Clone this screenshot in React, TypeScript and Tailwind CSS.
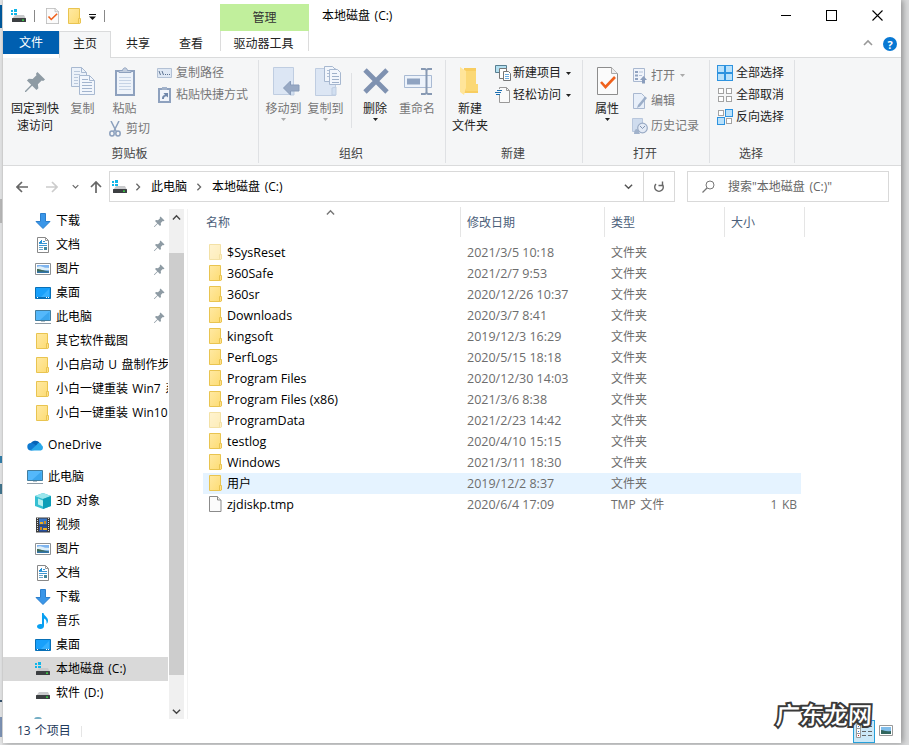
import type { ReactNode } from "react";

type IconProps = { className?: string };

type NavItem = {
  label: string;
  icon: ReactNode;
  pinned?: boolean;
  active?: boolean;
};

type FileRow = {
  name: string;
  date: string;
  kind: "folder" | "hidden" | "file";
  type?: string;
  size?: string;
  hover?: boolean;
};

function DriveIcon({ windows = true }: { windows?: boolean }) {
  return (
    <svg width="16" height="16" viewBox="0 0 16 16" className="shrink-0">
      {windows && (
        <path d="M0 2h2v2H0zM3 1h3v3H3zM0 5h2v2H0zM3 5h3v2H3z" fill="#10b5e8" />
      )}
      <path d="M4 7h9l2 4H1z" fill="#c9cacc" />
      <rect x="1" y="10" width="14" height="4" rx=".5" fill="#3c3f42" />
      <rect x="11" y="11.500" width="2" height="1.300" fill="#38e345" />
    </svg>
  );
}

function FolderIcon({ faded = false, className = "" }: IconProps & { faded?: boolean }) {
  return (
    <svg width="14" height="16" viewBox="0 0 14 16" className={`shrink-0 ${faded ? "opacity-50" : ""} ${className}`}>
      <defs>
        <linearGradient id="folderFill" x1="0" y1="0" x2="1" y2="1">
          <stop offset="0" stopColor="#ffe9a3" />
          <stop offset="1" stopColor="#fddc74" />
        </linearGradient>
      </defs>
      <path d="M.5.5h11v15H.5z" fill="url(#folderFill)" stroke="#e9c450" />
      <path d="M10.500 10.500h2v4.500l-1 .500h-1z" fill="#ffe08a" stroke="#e9c450" />
    </svg>
  );
}

function FileIcon() {
  return (
    <svg width="14" height="16" viewBox="0 0 14 16" className="shrink-0">
      <path d="M.5.500h8l3.500 3.500v11.500H.500z" fill="#fbfbfb" stroke="#8b8b8b" />
      <path d="M8.500.500V4H12" fill="#eee" stroke="#8b8b8b" />
    </svg>
  );
}

function DownloadIcon() {
  return (
    <svg width="16" height="16" viewBox="0 0 16 16">
      <path d="M5.500.500h5v8h4.500L8 15.500 1 8.500h4.500z" fill="#3a96e8" stroke="#2b7fcd" />
    </svg>
  );
}

function DocumentIcon() {
  return (
    <svg width="16" height="16" viewBox="0 0 16 16">
      <path d="M2.500.500h8l3 3v12h-11z" fill="#fff" stroke="#888" />
      <path d="M10.500.500v3h3" fill="none" stroke="#999" />
      <path d="M4 6.500h8M4 8.500h8M8 4.500h2" stroke="#3d97d3" />
      <path d="M4 10.500h4M4 12.500h4" stroke="#6ba6cb" />
      <path d="M4 5h1V4h1V3h1v3H4z" fill="#2391d8" />
      <path d="M9 10h3v3H9z" fill="#42869b" />
    </svg>
  );
}

function PictureIcon() {
  return (
    <svg width="16" height="16" viewBox="0 0 16 16">
      <path d="M.5 2.500h15v11H.500z" fill="#fff" stroke="#8d9194" />
      <path d="M2 4h12v8H2z" fill="#7fb4ee" />
      <path d="M2 6c4-2 5 1 12 1v2H2z" fill="#dceef9" />
      <path d="M2 8c3 0 6 1.500 12 2.500v.5H2z" fill="#3f6a55" />
      <path d="M2 10.500h12V12H2z" fill="#3275ac" />
    </svg>
  );
}

function DesktopIcon() {
  return (
    <svg width="16" height="16" viewBox="0 0 16 16">
      <path d="M.500 2.500h15v11H.500z" fill="#18a0fb" stroke="#0870b7" />
      <path d="M1 12.500h14" stroke="#0870b7" />
      <path d="M2 12.500h1M11 12.500h1M13 12.500h1" stroke="#fff" />
      <path d="M14 4L6 12h8z" fill="#35b0ff" />
    </svg>
  );
}

function ComputerIcon() {
  return (
    <svg width="16" height="16" viewBox="0 0 16 16">
      <path d="M.500 1.500h15v10H.500z" fill="#54b8fb" stroke="#437d9e" />
      <path d="M14.500 2.500L5 11h9.500z" fill="#3ba6ee" />
      <path d="M6 12h4v1H6z" fill="#b6c2ca" />
      <path d="M0 14.500h16" stroke="#8c9aa5" />
    </svg>
  );
}

function OneDriveIcon() {
  return (
    <svg width="17" height="16" viewBox="0 0 17 16" className="shrink-0">
      <path d="M3.500 7.500a5 4.800 0 0 1 9.200-1.500l-4 4z" fill="#0563b7" />
      <path d="M4 13.500a3.700 3.700 0 0 1 0-7.400c2 0 3.500 1 5.500 3l-2 4z" fill="#0f7ad1" />
      <path d="M10 7.500c1-2 4-2 4.500.5a3 3 0 0 1-.7 5.500H3.500z" fill="#28a8ea" />
    </svg>
  );
}

function CubeIcon() {
  return (
    <svg width="16" height="16" viewBox="0 0 16 16">
      <path d="M8 0l8 3v10l-8 3-8-3V3z" fill="#35bfd2" />
      <path d="M8 0l8 3-8 3-8-3z" fill="#9be6ec" />
      <path d="M8 6l8-3v10l-8 3z" fill="#0c9eb8" />
      <path d="M3 5.500L8 7.500v6l-5-2z" fill="#b6f0f0" />
    </svg>
  );
}

function VideoIcon() {
  return (
    <svg width="16" height="16" viewBox="0 0 16 16">
      <path d="M1 .5h14v15H1z" fill="#3d3d3d" />
      <path d="M4 1.500h8v6H4z" fill="#3977c8" />
      <path d="M4 8.500h8v6H4z" fill="#264fa0" />
      <path d="M5 5h3v2H5zM8 11h4v2H8z" fill="#f0af23" />
      <path d="M9 4h2v3H9zM5 10h2v3H5z" fill="#c78a24" />
      <path d="M2.500 1v14M13.500 1v14" stroke="#ddd" strokeDasharray="1 1" />
    </svg>
  );
}

function MusicIcon() {
  return (
    <svg width="16" height="16" viewBox="0 0 16 16">
      <path d="M7 0h1.500c.5 3 4.500 4 4.500 7.500 0 1.500-.5 2.500-1.500 3.500.5-3-.5-4.500-2.500-5.500V13c0 1.700-1.500 3-3.700 3C3.500 16 2 15 2 13.500S3.500 11 5.500 11c.6 0 1 .1 1.500.3z" fill="#08a0f2" />
    </svg>
  );
}

function Pin({ className = "" }: IconProps) {
  return (
    <svg viewBox="0 0 22 22" className={className}>
      <path d="M13 1l8 8-2 1.500-1.500-.5-4 4 .5 4-2 2-4.500-4.500L1 22H0v-1l6.500-6.500L2 10l2-2 4 .5 4-4L11.500 3z" fill="#8e9ba4" />
    </svg>
  );
}

function SmallArrow({ faded = false }: { faded?: boolean }) {
  return (
    <svg width="5" height="3" viewBox="0 0 5 3" className="shrink-0">
      <path d="M0 0h5L2.500 3z" fill={faded ? "#aaa" : "#222"} />
    </svg>
  );
}

function Chevron({ dir, className = "" }: IconProps & { dir: "up" | "down" | "right" }) {
  const d = { up: "M1 6l4-4 4 4", down: "M1 3l4 4 4-4", right: "M3 1l4 4-4 4" }[dir];
  return (
    <svg viewBox="0 0 10 10" className={`shrink-0 ${className}`}>
      <path d={d} fill="none" stroke="currentColor" strokeWidth="1.600" />
    </svg>
  );
}

function CopyPagesIcon() {
  return (
    <svg width="24" height="28" viewBox="0 0 24 28">
      <path d="M.500.500h10l5 5v14H.500z" fill="#ecf2fa" stroke="#a8b9d1" />
      <path d="M10.500.500v5h5" fill="none" stroke="#a8b9d1" />
      <path d="M3 4.500h6M3 7.500h6M3 10.500h4M3 13.500h4M3 16.500h4" stroke="#b9c8dc" />
      <path d="M8.500 8.500h10l5 5v14h-15z" fill="#f2f6fc" stroke="#a8b9d1" />
      <path d="M18.500 8.500v5h5" fill="none" stroke="#a8b9d1" />
      <path d="M11 12.500h6M11 15.500h10M11 18.500h10M11 21.500h10M11 24.500h10" stroke="#a2b4ce" />
    </svg>
  );
}

function PasteIcon() {
  return (
    <svg width="20" height="29" viewBox="0 0 20 29">
      <path d="M1 4h18v24H1z" fill="#eef3fa" stroke="#8ea1be" strokeWidth="2" />
      <path d="M4 5.500V3.500h3.500C8 0 12 0 12.500 3.500H16v2z" fill="#c2cdde" stroke="#8ea1be" />
      <path d="M4 10.500h12M4 13.500h12M4 16.500h12M4 19.500h12M4 22.500h12" stroke="#c6d3e5" />
    </svg>
  );
}

function CutIcon() {
  return (
    <svg width="12" height="16" viewBox="0 0 12 16" fill="none" stroke="#8ca0bd" strokeWidth="1.500">
      <path d="M2 0l5.500 11M10 0L4.500 11" />
      <ellipse cx="3" cy="12.500" rx="2.200" ry="2.500" />
      <ellipse cx="9" cy="12.500" rx="2.200" ry="2.500" />
    </svg>
  );
}

function PathIcon() {
  return (
    <svg width="15" height="10" viewBox="0 0 15 10">
      <path d="M.500.500h14v9H.500z" fill="#dfe8f4" stroke="#b3c1d5" />
      <path d="M2 3l1.500 4M5 3l1.500 4M8 6.500h1M10 6.500h1M12 6.500h1" stroke="#5d7392" />
    </svg>
  );
}

function PasteShortcutIcon() {
  return (
    <svg width="13" height="16" viewBox="0 0 13 16">
      <path d="M1 2h11v13H1z" fill="#f0f4fb" stroke="#8ea1be" strokeWidth="2" />
      <path d="M4 0h5v3H4z" fill="#a2b2ca" />
      <path d="M4 12c0-3 1-4 3-4L5.500 6H10v4.500L8.500 9.300C6.500 9.500 6 10 6 12z" fill="#6f87ab" />
    </svg>
  );
}

function MoveIcon() {
  return (
    <svg width="27" height="29" viewBox="0 0 27 29">
      <path d="M.500.500h20v27H.500z" fill="#dce6f4" stroke="#bfcde1" />
      <path d="M17 20v8h4v-8z" fill="#d1dff1" stroke="#bfcde1" />
      <path d="M10.500 21l7-7v4h8.500v6h-8.500v4z" fill="#98a9c4" stroke="#889bb9" />
    </svg>
  );
}

function CopyToIcon() {
  return (
    <svg width="27" height="31" viewBox="0 0 27 31">
      <path d="M.500 2.500h20v27H.500z" fill="#dce6f4" stroke="#bfcde1" />
      <path d="M17 22v7h4v-8z" fill="#d1dff1" stroke="#bfcde1" />
      <path d="M9.500.500h8l3 3v12h-11z" fill="#f2f6fc" stroke="#a7b8d0" />
      <path d="M12 4.500h5M12 7.500h5M12 10.500h5" stroke="#afbfd5" />
      <path d="M14.500 3.500h8l3 3v12h-11z" fill="#f2f6fc" stroke="#a7b8d0" />
      <path d="M17 7.500h5M17 10.500h7M17 13.500h7M17 16.500h7" stroke="#9fb1ca" />
    </svg>
  );
}

function DeleteIcon() {
  return (
    <svg width="26" height="26" viewBox="0 0 26 26">
      <path d="M2 2l22 22M24 2L2 24" stroke="#7f92b1" strokeWidth="4.800" />
    </svg>
  );
}

function RenameIcon() {
  return (
    <svg width="28" height="27" viewBox="0 0 28 27">
      <path d="M.500 7.500h27v12H.500z" fill="#edf3fb" stroke="#a9bad3" />
      <path d="M3 10.500h13v6H3z" fill="#8fa3c1" />
      <path d="M17 1h4l1.500 1L24 1h4M17 26h4l1.500-1L24 26h4M22.500 2v23" fill="none" stroke="#8799b3" strokeWidth="2" />
    </svg>
  );
}

function NewFolderIcon() {
  return (
    <svg width="20" height="28" viewBox="0 0 20 28">
      <path d="M4 1h12v16h2v9H4z" fill="#f8cd60" />
      <path d="M0 0l6 4v17l-2 7-4-3z" fill="#ffe59a" />
      <path d="M6 4h10v13h2v7H6z" fill="#fbd875" />
    </svg>
  );
}

function NewItemIcon() {
  return (
    <svg width="16" height="16" viewBox="0 0 16 16">
      <path d="M.500.500h11v7H.500z" fill="#b3dff0" stroke="#587f91" />
      <path d="M4.500 3.500h7v10h-7z" fill="#fff" stroke="#777" />
      <path d="M8.500 6.500h5l2 2v7h-7z" fill="#fff" stroke="#777" />
      <path d="M10 9.500h4M10 11.500h4M10 13.500h4" stroke="#6cace0" />
    </svg>
  );
}

function EasyAccessIcon() {
  return (
    <svg width="16" height="16" viewBox="0 0 16 16">
      <path d="M4.500.500h7l3 3v12h-10z" fill="#fafafa" stroke="#999" />
      <path d="M11.500.500v3h3" fill="none" stroke="#999" />
      <path d="M1 2h7v6H1z" fill="#f8f9fa" />
      <path d="M2 3.500h5M0 5.500h6M1 7.500h4" stroke="#1d6fb0" />
    </svg>
  );
}

function CheckPage({ className = "" }: IconProps) {
  return (
    <svg viewBox="0 0 21 28" preserveAspectRatio="none" className={className}>
      <path d="M.500.500h14l6 6v21H.500z" fill="#fbfbfb" stroke="#8d8d8d" />
      <path d="M14.500.500v6h6" fill="#eee" stroke="#aaa" />
      <path d="M4 15l4.500 5L18 10" fill="none" stroke="#f0611c" strokeWidth="2.600" />
    </svg>
  );
}

function OpenIcon() {
  return (
    <svg width="14" height="16" viewBox="0 0 14 16">
      <path d="M.500.500h11v13H.500z" fill="#f0f4fb" stroke="#a9b8d0" />
      <path d="M2 3h3v2H2zM2 6.500h3v2H2zM2 10h3v2H2z" fill="#8fa2c0" />
      <path d="M6 4h4M6 7.500h3" stroke="#b4c2d8" />
      <path d="M10.500 8l3.500 4h-2v3.500H9V12H7z" fill="#8a9dbc" />
    </svg>
  );
}

function EditIcon() {
  return (
    <svg width="14" height="16" viewBox="0 0 14 16">
      <path d="M.500.500h8l3 3v12H.500z" fill="#e8eff9" stroke="#a9b8d0" />
      <path d="M12 3.500l2 1.500-7 8.500-3 1.500 1-3z" fill="#9caec8" />
    </svg>
  );
}

function HistoryIcon() {
  return (
    <svg width="16" height="16" viewBox="0 0 16 16">
      <path d="M.500.500h10v13H.500z" fill="#cfdcee" stroke="#b9c7dc" />
      <path d="M2 16c0-5 3-6 4-4l2 4z" fill="#a1b2cb" />
      <circle cx="10.500" cy="10" r="4.800" fill="#e3eaf5" stroke="#9aabc5" strokeWidth="1.200" />
      <path d="M8 8l2.500 2.500L13 8" fill="none" stroke="#8093b0" />
    </svg>
  );
}

// four-square icon shared by the three selection commands
function SquaresIcon({ mode }: { mode: "all" | "none" | "invert" }) {
  const on = { all: [true, true, true, true], none: [false, false, false, false], invert: [false, true, true, false] }[mode];
  const pos = [[0, 0], [8, 0], [0, 8], [8, 8]];
  return (
    <svg width="16" height="16" viewBox="0 0 16 16">
      {pos.map(([x, y], i) =>
        on[i] ? (
          <rect key={i} x={x + 0.5} y={y + 0.5} width="7" height="7" fill="#b9e1fb" stroke="#2e93df" />
        ) : (
          <rect key={i} x={x + 1.5} y={y + 1.5} width="5" height="5" fill="#fff" stroke="#a3a3a3" />
        )
      )}
    </svg>
  );
}

function RibbonGroup({ label, className, children }: { label: string; className: string; children: ReactNode }) {
  return (
    <div className={`flex shrink-0 flex-col ${className}`}>
      <div className="mt-[2px] flex h-[85px] border-r border-[#dfe1e4]">{children}</div>
      <div className="flex h-[18px] items-center justify-center border-r border-[#dfe1e4] pr-[2px] text-[#444]">{label}</div>
    </div>
  );
}

type BigButtonProps = {
  icon: ReactNode;
  lines: string[];
  className: string;
  disabled?: boolean;
  arrow?: boolean;
};

function BigButton({ icon, lines, className, disabled = false, arrow = false }: BigButtonProps) {
  return (
    <button className={`flex shrink-0 flex-col items-center leading-[17px] ${disabled ? "text-[#777]" : "text-[#222]"} ${className}`}>
      <span className="mt-[6px] mb-[4px] flex h-[30px] items-center justify-center">{icon}</span>
      {lines.map((line) => (
        <span key={line} className="whitespace-nowrap">{line}</span>
      ))}
      {arrow && <span className="mt-px"><SmallArrow faded={disabled} /></span>}
    </button>
  );
}

type SmallButtonProps = {
  icon: ReactNode;
  label: string;
  className?: string;
  disabled?: boolean;
  arrow?: boolean;
};

function SmallButton({ icon, label, className = "h-[22px]", disabled = false, arrow = false }: SmallButtonProps) {
  return (
    <button className={`flex items-center whitespace-nowrap ${disabled ? "text-[#777]" : "text-[#222]"} ${className}`}>
      <span className="mr-[3px] flex w-[16px] justify-center">{icon}</span>
      {label}
      {arrow && <span className="ml-[5px]"><SmallArrow faded={disabled} /></span>}
    </button>
  );
}

function TitleBar() {
  return (
    <div className="flex h-[31px] shrink-0">
      <div className="flex w-[217px] items-center pl-[8px]">
        <DriveIcon />
        <span className="ml-[7px] h-[12px] w-px bg-[#888]" />
        <CheckPage className="ml-[11px] h-[16px] w-[13px]" />
        <FolderIcon className="ml-[9px]" />
        <svg width="7" height="6" viewBox="0 0 7 6" className="mt-[3px] ml-[7px]">
          <path d="M0 .500h7" stroke="#111" />
          <path d="M0 2.500h7L3.500 6z" fill="#111" />
        </svg>
        <span className="ml-[8px] h-[12px] w-px bg-[#888]" />
      </div>
      <div className="mt-[4px] flex w-[89px] items-center justify-center bg-[#c1ef9c] text-[#333]">管理</div>
      <div className="ml-[13px] flex-1 pt-[7px] leading-[18px] [word-spacing:1.5px]">本地磁盘 (C:)</div>
      <div className="mt-[9px] mr-[18px] flex h-[12px] items-center gap-[35px]">
        <span className="h-px w-[10px] bg-black" />
        <span className="size-[11px] border border-black" />
        <svg width="11" height="11" viewBox="0 0 11 11">
          <path d="M.5.5l10 10M10.500.500l-10 10" stroke="#000" strokeWidth="1.100" />
        </svg>
      </div>
    </div>
  );
}

function TabRow() {
  return (
    <div className="flex h-[27px] shrink-0 text-[#222]">
      <div className="flex h-[23px] w-[56px] items-center justify-center bg-[#005fb0] pt-px text-white">文件</div>
      <div className="z-10 flex w-[52px] justify-center border-x border-t border-[#dadbdc] bg-[#f5f6f7] pt-[3px]">主页</div>
      <div className="flex flex-1 border-b border-[#dadbdc] leading-[26px]">
        <div className="w-[54px] text-center">共享</div>
        <div className="w-[52px] text-center">查看</div>
        <div className="ml-[3px] h-[20px] w-[89px] border-x border-[#dcdcdc] pr-[2px] text-center">驱动器工具</div>
        <div className="flex flex-1 items-center justify-end gap-[10px] pr-[4px]">
          <Chevron dir="up" className="size-[10px] text-[#999]" />
          <span className="flex size-[14px] items-center justify-center rounded-full bg-[#0878d3] text-[11px] leading-none font-bold text-white">?</span>
        </div>
      </div>
    </div>
  );
}

function Ribbon() {
  return (
    <div className="flex h-[108px] shrink-0 border-b border-[#dadbdc] bg-[#f5f6f7]">
      <RibbonGroup label="剪贴板" className="w-[256px]">
        <BigButton className="w-[64px]" icon={<Pin className="size-[21px]" />} lines={["固定到快", "速访问"]} />
        <BigButton className="w-[31px]" disabled icon={<CopyPagesIcon />} lines={["复制"]} />
        <div className="ml-[8px] w-[50px]">
          <BigButton className="ml-[3px] w-[31px]" disabled icon={<PasteIcon />} lines={["粘贴"]} />
          <button className="mt-[3px] ml-[3px] flex h-[18px] items-center gap-[5px] text-[#777]"><CutIcon />剪切</button>
        </div>
        <div className="pt-[2px]">
          <SmallButton disabled icon={<PathIcon />} label="复制路径" className="h-[22px] [&>span]:mr-[4px]" />
          <SmallButton disabled icon={<PasteShortcutIcon />} label="粘贴快捷方式" className="h-[22px] [&>span]:mr-[4px]" />
        </div>
      </RibbonGroup>
      <RibbonGroup label="组织" className="w-[187px]">
        <BigButton className="ml-[4px] w-[41px] [&>span:first-child]:pl-[5px]" disabled arrow icon={<MoveIcon />} lines={["移动到"]} />
        <BigButton className="ml-px w-[41px] [&>span:first-child]:pl-[5px]" disabled arrow icon={<CopyToIcon />} lines={["复制到"]} />
        <span className="mt-[13px] ml-[5px] h-[55px] w-px bg-[#dfe1e4]" />
        <BigButton className="ml-[7px] w-[32px] [&>span:first-child]:pl-[2px]" arrow icon={<DeleteIcon />} lines={["删除"]} />
        <BigButton className="ml-[6px] w-[40px] [&>span:first-child]:pl-[2px]" disabled icon={<RenameIcon />} lines={["重命名"]} />
      </RibbonGroup>
      <RibbonGroup label="新建" className="w-[137px]">
        <BigButton className="ml-[4px] w-[40px]" icon={<NewFolderIcon />} lines={["新建", "文件夹"]} />
        <div className="ml-[5px] pt-[2px]">
          <SmallButton className="h-[22px] [&>span]:mr-[2px]" arrow icon={<NewItemIcon />} label="新建项目" />
          <SmallButton className="h-[22px] [&>span]:mr-[2px]" arrow icon={<EasyAccessIcon />} label="轻松访问" />
        </div>
      </RibbonGroup>
      <RibbonGroup label="打开" className="w-[127px]">
        <BigButton className="ml-[8px] w-[32px]" arrow icon={<CheckPage className="h-[28px] w-[21px]" />} lines={["属性"]} />
        <div className="ml-[9px] pt-[3px]">
          <SmallButton className="h-[25px]" disabled arrow icon={<OpenIcon />} label="打开" />
          <SmallButton className="h-[25px]" disabled icon={<EditIcon />} label="编辑" />
          <SmallButton className="h-[25px]" disabled icon={<HistoryIcon />} label="历史记录" />
        </div>
      </RibbonGroup>
      <RibbonGroup label="选择" className="w-[85px]">
        <div className="ml-[7px] pt-[2px]">
          <SmallButton icon={<SquaresIcon mode="all" />} label="全部选择" />
          <SmallButton icon={<SquaresIcon mode="none" />} label="全部取消" />
          <SmallButton icon={<SquaresIcon mode="invert" />} label="反向选择" />
        </div>
      </RibbonGroup>
    </div>
  );
}

function NavArrow({ d, color }: { d: string; color: string }) {
  return (
    <svg width="12" height="12" viewBox="0 0 12 12" className="shrink-0">
      <path d={d} fill="none" stroke={color} strokeWidth="1.700" />
    </svg>
  );
}

function AddressRow() {
  return (
    <div className="flex h-[43px] shrink-0 items-start pt-[5px]">
      <div className="flex h-[31px] w-[106px] items-center pl-[13px]">
        <NavArrow d="M12 6H1M6 1L1 6l5 5" color="#666" />
        <span className="w-[18px]" />
        <NavArrow d="M0 6h11M6 1l5 5-5 5" color="#ccc" />
        <Chevron dir="down" className="ml-[14px] size-[7px] text-[#666]" />
        <span className="w-[11px]" />
        <NavArrow d="M6 12V1M1 6l5-5 5 5" color="#666" />
      </div>
      <div className="flex h-[31px] w-[566px] items-center border border-[#d9d9d9]">
        <span className="ml-[2px]"><DriveIcon /></span>
        <Chevron dir="right" className="ml-[6px] size-[8px] text-[#666]" />
        <span className="ml-[9px]">此电脑</span>
        <Chevron dir="right" className="ml-[8px] size-[8px] text-[#666]" />
        <span className="ml-[9px] [word-spacing:1.5px]">本地磁盘 (C:)</span>
        <Chevron dir="down" className="mr-[10px] ml-auto size-[9px] text-[#555]" />
        <div className="flex h-full w-[31px] items-center justify-center border-l border-[#d9d9d9]">
          <svg width="12" height="12" viewBox="0 0 12 12">
            <path d="M9 2.500A4.500 4.500 0 1 1 4 2M4.500 5.500V1.700H1" fill="none" stroke="#666" strokeWidth="1.400" transform="translate(0 0)" className="hidden" />
            <path d="M3 3A4.300 4.300 0 1 0 9 3M5.500 4.500H9.500V.500" fill="none" stroke="#666" strokeWidth="1.400" />
          </svg>
        </div>
      </div>
      <div className="ml-[12px] flex h-[31px] w-[202px] items-center border border-[#d9d9d9] text-[#666] [word-spacing:1.5px]">
        <svg width="13" height="13" viewBox="0 0 13 13" className="mr-[13px] ml-[14px]">
          <circle cx="8" cy="5" r="4" fill="none" stroke="#777" />
          <path d="M5 8L.500 12.500" stroke="#777" strokeWidth="1.300" />
        </svg>
        搜索"本地磁盘 (C:)"
      </div>
    </div>
  );
}

const quickAccess: NavItem[] = [
  { label: "下载", icon: <DownloadIcon />, pinned: true },
  { label: "文档", icon: <DocumentIcon />, pinned: true },
  { label: "图片", icon: <PictureIcon />, pinned: true },
  { label: "桌面", icon: <DesktopIcon />, pinned: true },
  { label: "此电脑", icon: <ComputerIcon />, pinned: true },
  { label: "其它软件截图", icon: <FolderIcon /> },
  { label: "小白启动 U 盘制作步", icon: <FolderIcon /> },
  { label: "小白一键重装 Win7 系", icon: <FolderIcon /> },
  { label: "小白一键重装 Win10", icon: <FolderIcon /> },
];

const thisPc: NavItem[] = [
  { label: "3D 对象", icon: <CubeIcon /> },
  { label: "视频", icon: <VideoIcon /> },
  { label: "图片", icon: <PictureIcon /> },
  { label: "文档", icon: <DocumentIcon /> },
  { label: "下载", icon: <DownloadIcon /> },
  { label: "音乐", icon: <MusicIcon /> },
  { label: "桌面", icon: <DesktopIcon /> },
  { label: "本地磁盘 (C:)", icon: <DriveIcon />, active: true },
  { label: "软件 (D:)", icon: <DriveIcon windows={false} /> },
];

function NavRow({ item, root = false }: { item: NavItem; root?: boolean }) {
  return (
    <div className={`flex h-[24px] shrink-0 items-center ${root ? "pl-[24px]" : "pl-[32px]"} ${item.active ? "bg-[#d9d9d9]" : ""}`}>
      <span className="mr-[5px] flex w-[16px] shrink-0 justify-center">{item.icon}</span>
      <span className="flex-1 overflow-hidden whitespace-nowrap [word-spacing:1.2px]">{item.label}</span>
      {item.pinned && <Pin className="mr-[3px] size-[11px] shrink-0" />}
    </div>
  );
}

function NavPane() {
  return (
    <div className="flex w-[185px] shrink-0 border-r border-[#f3f3f3]">
      <div className="flex w-[165px] flex-col overflow-hidden">
        {quickAccess.map((item) => (
          <NavRow key={item.label} item={item} />
        ))}
        <div className="h-[8px] shrink-0" />
        <div className="tracking-[0.15px]">
          <NavRow root item={{ label: "OneDrive", icon: <OneDriveIcon /> }} />
        </div>
        <div className="h-[8px] shrink-0" />
        <NavRow root item={{ label: "此电脑", icon: <ComputerIcon /> }} />
        {thisPc.map((item) => (
          <NavRow key={item.label} item={item} />
        ))}
        <span className="mt-[12px] ml-[31px] h-[6px] w-[8px] shrink-0 rounded-full bg-[#75aec4]" />
      </div>
      <div className="ml-px flex w-[15px] flex-col items-center bg-[#f0f0f0]">
        <span className="flex h-[44px] pt-[5px]"><Chevron dir="up" className="size-[9px] text-[#444]" /></span>
        <span className="h-[422px] w-full bg-[#cdcdcd]" />
        <span className="flex flex-1 items-end pb-[3px]"><Chevron dir="down" className="size-[9px] text-[#444]" /></span>
      </div>
    </div>
  );
}

const files: FileRow[] = [
  { name: "$SysReset", date: "2021/3/5 10:18", kind: "hidden" },
  { name: "360Safe", date: "2021/2/7 9:53", kind: "folder" },
  { name: "360sr", date: "2020/12/26 10:37", kind: "folder" },
  { name: "Downloads", date: "2020/3/7 8:41", kind: "folder" },
  { name: "kingsoft", date: "2019/12/3 16:29", kind: "folder" },
  { name: "PerfLogs", date: "2020/5/15 18:18", kind: "folder" },
  { name: "Program Files", date: "2020/12/30 14:03", kind: "folder" },
  { name: "Program Files (x86)", date: "2021/3/6 8:38", kind: "folder" },
  { name: "ProgramData", date: "2021/2/23 14:42", kind: "hidden" },
  { name: "testlog", date: "2020/4/10 15:15", kind: "folder" },
  { name: "Windows", date: "2021/3/11 18:30", kind: "folder" },
  { name: "用户", date: "2019/12/2 8:37", kind: "folder", hover: true },
  { name: "zjdiskp.tmp", date: "2020/6/4 17:09", kind: "file", type: "TMP 文件", size: "1 KB" },
];

function FileList() {
  return (
    <div className="-mt-[2px] flex-1 pl-[15px]">
      <div className="flex h-[30px] items-center text-[#4c607a]">
        <div className="flex h-full w-[258px] items-center border-r border-[#e5e5e5] pt-[2px] pl-[3px]">
          名称
          <Chevron dir="up" className="ml-[96px] size-[9px] self-start text-[#777]" />
        </div>
        <div className="flex h-full w-[144px] items-center border-r border-[#e5e5e5] pt-[2px] pl-[6px]">修改日期</div>
        <div className="flex h-full w-[120px] items-center border-r border-[#e5e5e5] pt-[2px] pl-[6px]">类型</div>
        <div className="flex h-full w-[80px] items-center border-r border-[#e5e5e5] pt-[2px] pl-[6px]">大小</div>
      </div>
      <div className="mt-[5px] w-[598px]">
        {files.map((f) => (
          <div key={f.name} className={`flex h-[21px] items-center text-[#6d6d6d] ${f.hover ? "bg-[#e5f3ff]" : ""}`}>
            <span className="ml-[6px] w-[18px] pb-px">{f.kind === "file" ? <FileIcon /> : <FolderIcon faded={f.kind === "hidden"} />}</span>
            <span className={`w-[240px] text-black ${f.hover ? "" : "text-[12.5px]"}`}>{f.name}</span>
            <span className="w-[144px] text-[12.5px]">{f.date}</span>
            <span className="w-[120px] [word-spacing:1.5px]">{f.type ?? "文件夹"}</span>
            <span className="flex-1 pr-[4px] text-right [word-spacing:1.5px]">{f.size}</span>
          </div>
        ))}
      </div>
    </div>
  );
}

function StatusBar() {
  return (
    <div className="flex h-[24px] shrink-0 items-center pl-[14px] text-[#1e395b]">
      <span className="w-[64px] [word-spacing:1px]">13 个项目</span>
      <span className="h-[11px] w-px bg-[#e5e5e5]" />
      <div className="ml-auto flex h-[23px] w-[22px] items-center justify-center border border-[#26a0da] bg-[#cce8f7]">
        <svg width="17" height="15" viewBox="0 0 17 15">
          <path d="M.500.500h4v13h-4zM.500 4.500h4M.500 9.500h4" fill="#fff" stroke="#999" />
          <path d="M6 2.500h4M12 2.500h4M6 7.500h4M12 7.500h4M6 11.500h4M12 11.500h4" stroke="#666" />
          <path d="M2 2h1v1H2zM2 7h1v1H2z" fill="#2874dc" />
          <path d="M2 11h1v1H2z" fill="#d02020" />
        </svg>
      </div>
      <svg width="14" height="12" viewBox="0 0 14 12" className="mr-[8px] ml-[4px]">
        <path d="M.500.500h13v10H.500z" fill="#fff" stroke="#999" />
        <path d="M2 2h10v7H2z" fill="#80bdea" />
        <path d="M2 5c4 0 4 2 10 1v3H2z" fill="#31665e" />
      </svg>
    </div>
  );
}

// slivers of the windows that lie behind this one
function BackgroundStrip() {
  return (
    <div className="flex w-[3px] shrink-0 flex-col border-r border-[#dedede] bg-[#e4e5e6]">
      <span className="mt-[5px] h-[23px] bg-[#005a9e]" />
      <span className="mt-[171px] h-[24px] bg-[#b9b9b9]" />
      <span className="mt-[233px] h-[7px] bg-[#327eaa]" />
      <span className="mt-[21px] h-[10px] bg-[#41758e]" />
      <span className="mt-[206px] h-[2px] bg-[#36526c]" />
      <span className="mt-[15px] h-[20px] bg-[#7d93b5]" />
    </div>
  );
}

export default function App() {
  return (
    <div className="relative flex h-[745px] w-[909px] overflow-hidden bg-[#d9dadb] font-['Open_Sans','Noto_Sans_CJK_SC',sans-serif] text-[12px] leading-[18px] text-black">
      <BackgroundStrip />
      <div className="flex h-[743px] w-[898px] flex-col bg-white shadow-[2px_0_6px_rgba(0,0,0,0.35)]">
        <TitleBar />
        <TabRow />
        <Ribbon />
        <AddressRow />
        <div className="flex h-[510px] shrink-0">
          <NavPane />
          <FileList />
        </div>
        <StatusBar />
      </div>
      <div className="absolute top-[701px] left-[776px] -skew-x-3 text-[24px] leading-[28px] font-medium whitespace-nowrap text-white [-webkit-text-stroke:4px_#3a3a3a] [paint-order:stroke_fill]">
        广东龙网
      </div>
    </div>
  );
}
